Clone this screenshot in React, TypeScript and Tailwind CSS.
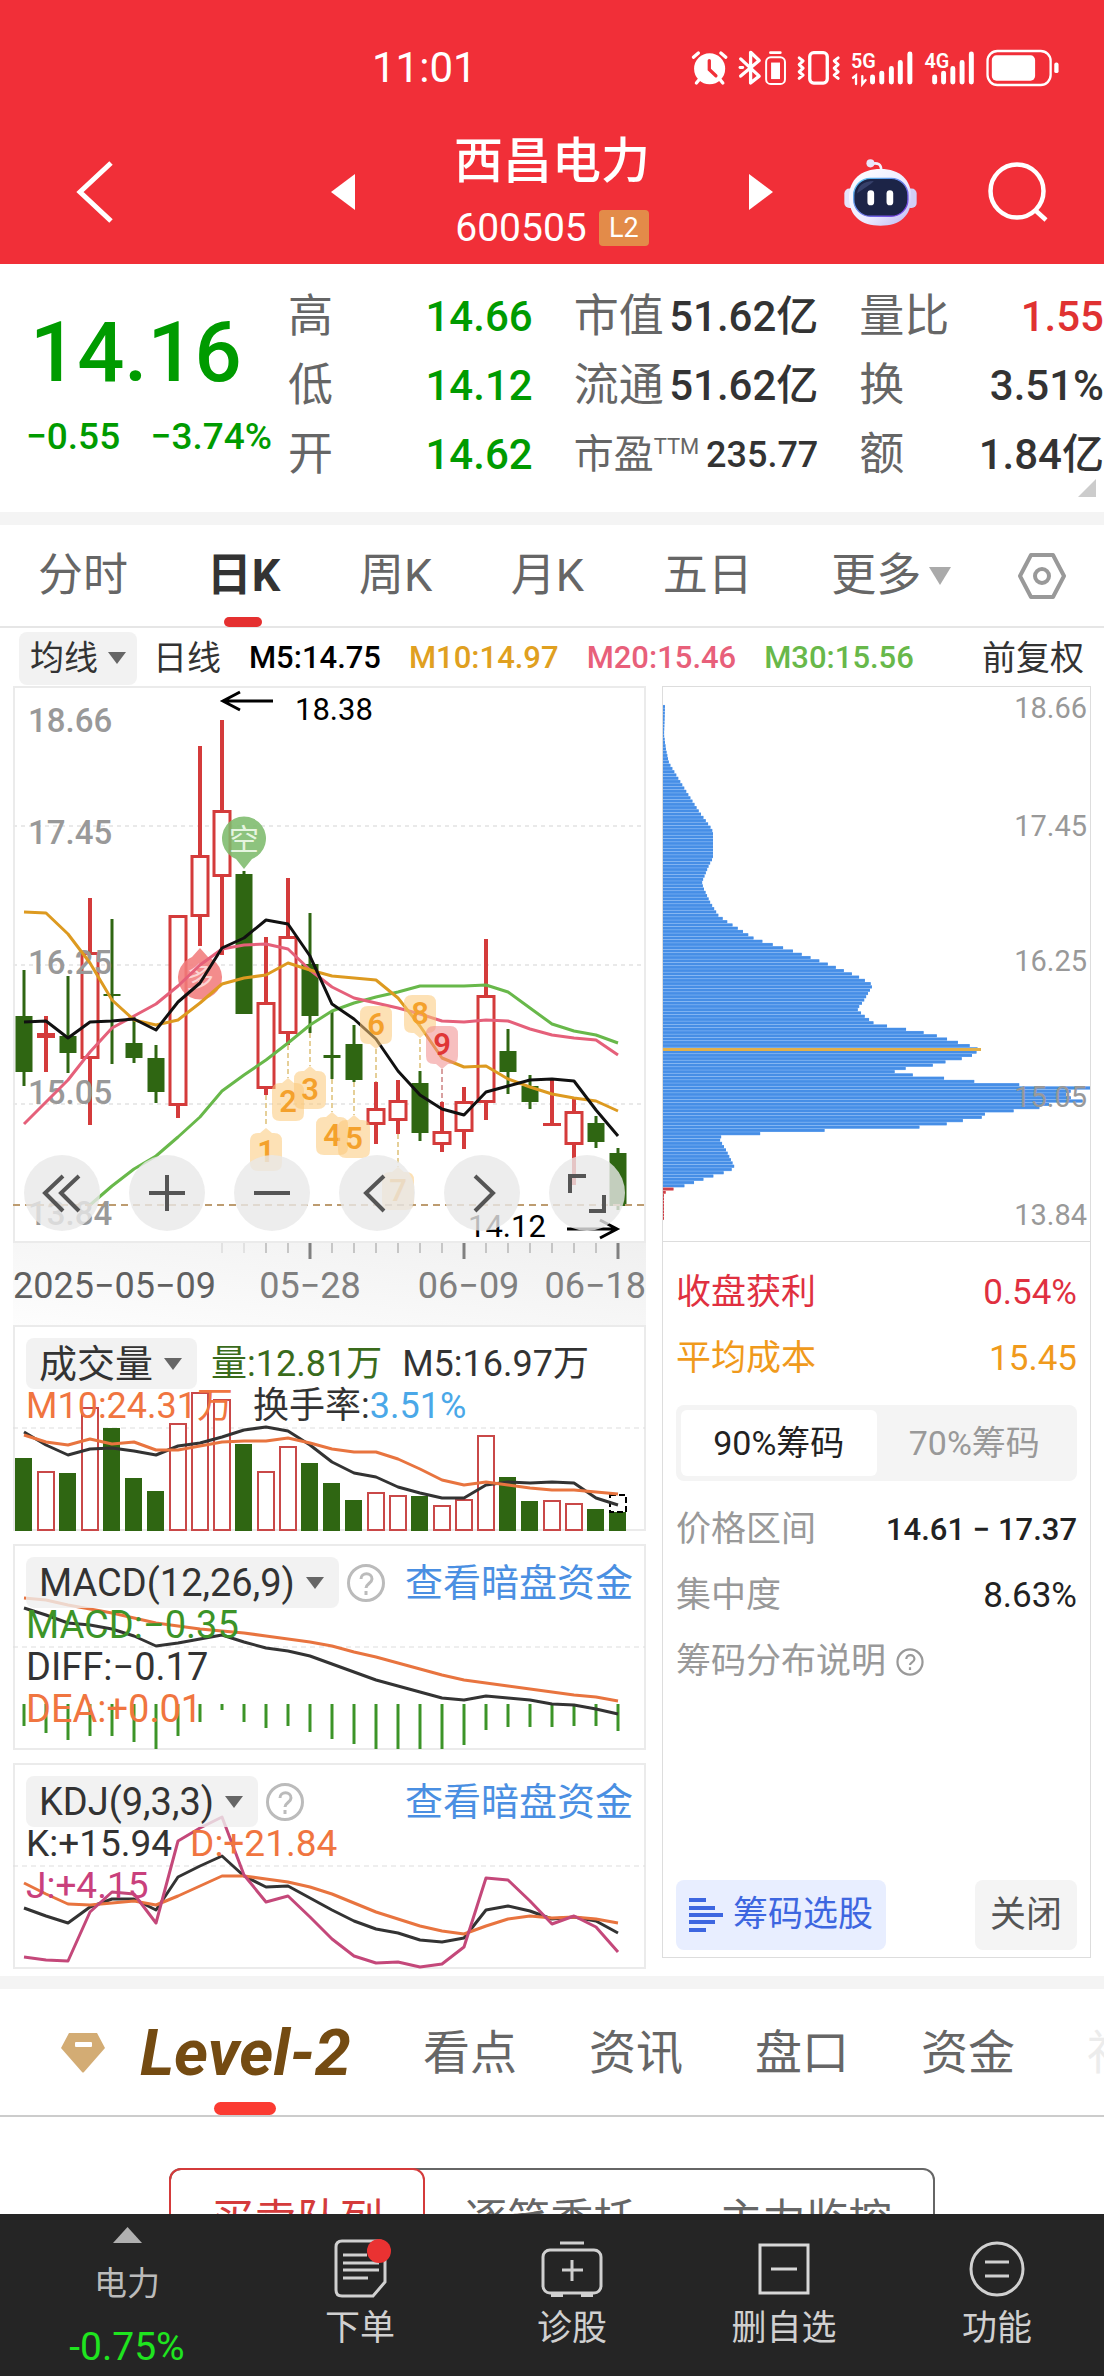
import React from "react";

const GREEN = "#2f6612";
const RED = "#d43b3b";

const X0 = 24;
const STEP = 22;
const xAt = (i: number) => X0 + STEP * i;

const toPoints = (ys: number[], start = 0) =>
  ys.map((y, i) => `${xAt(i + start)},${y}`).join(" ");

/* [kind, wick top, body top, body bottom, wick bottom] */
type Candle = [string, number, number, number, number];
const candles: Candle[] = [
  ["g", 970, 1016, 1072, 1086],
  ["r", 1016, 1033, 1038, 1072],
  ["g", 976, 1036, 1053, 1073],
  ["r", 898, 952, 1059, 1125],
  ["g", 919, 994, 996, 1064],
  ["g", 1017, 1043, 1058, 1063],
  ["g", 1045, 1058, 1092, 1103],
  ["r", 915, 915, 1106, 1118],
  ["r", 746, 855, 917, 946],
  ["r", 720, 810, 877, 955],
  ["g", 871, 874, 1014, 1014],
  ["r", 937, 1002, 1089, 1095],
  ["r", 878, 936, 1034, 1045],
  ["g", 913, 964, 1016, 1033],
  ["g", 1012, 1055, 1058, 1079],
  ["g", 1025, 1044, 1080, 1082],
  ["r", 1082, 1108, 1125, 1144],
  ["r", 1080, 1100, 1121, 1134],
  ["g", 1071, 1083, 1133, 1141],
  ["r", 1102, 1131, 1145, 1152],
  ["r", 1087, 1101, 1132, 1149],
  ["r", 939, 995, 1103, 1120],
  ["g", 1029, 1051, 1072, 1094],
  ["g", 1075, 1086, 1102, 1109],
  ["r", 1080, 1123, 1126, 1126],
  ["r", 1099, 1111, 1145, 1185],
  ["g", 1116, 1123, 1142, 1148],
  ["g", 1148, 1153, 1206, 1210],
];

const ma5 = [1022, 1021, 1038, 1022, 1021, 1019, 1030, 1002, 983, 948, 938, 920, 924, 956, 1004, 1019, 1039, 1071, 1095, 1109, 1115, 1092, 1086, 1080, 1079, 1081, 1110, 1136];
const ma10 = [912, 913, 934, 963, 1000, 1020, 1025, 1020, 1003, 984, 978, 975, 963, 970, 976, 978, 980, 998, 1026, 1058, 1067, 1066, 1079, 1087, 1094, 1098, 1101, 1111];
const ma20 = [1124, 1102, 1080, 1052, 1028, 1016, 1004, 986, 965, 949, 945, 944, 949, 970, 987, 998, 1003, 1008, 1014, 1021, 1022, 1020, 1021, 1029, 1035, 1038, 1040, 1055];
const ma30 = [1205, 1186, 1169, 1156, 1137, 1117, 1091, 1075, 1060, 1043, 1025, 1011, 1003, 997, 992, 986, 986, 986, 985, 992, 1008, 1024, 1031, 1035, 1043];

/* label, candle index, box top, points up?, dashed line from/to, hot? */
const counts: [string, number, number, boolean, number, number, boolean][] = [
  ["1", 11, 1133, true, 1095, 1127, false],
  ["2", 12, 1083, true, 1045, 1078, false],
  ["3", 13, 1071, true, 1033, 1066, false],
  ["4", 14, 1117, true, 1079, 1112, false],
  ["5", 15, 1120, true, 1082, 1115, false],
  ["6", 16, 1006, false, 1049, 1082, false],
  ["7", 17, 1172, true, 1134, 1167, false],
  ["8", 18, 995, false, 1039, 1071, false],
  ["9", 19, 1026, false, 1069, 1102, true],
];

const volumes: [string, number][] = [
  ["g", 1458], ["r", 1471], ["g", 1473], ["r", 1407], ["g", 1428], ["g", 1478], ["g", 1491],
  ["r", 1423], ["r", 1392], ["r", 1399], ["g", 1444], ["r", 1471], ["r", 1446], ["g", 1463],
  ["g", 1483], ["g", 1500], ["r", 1492], ["r", 1495], ["g", 1496], ["r", 1505], ["r", 1499],
  ["r", 1435], ["g", 1477], ["g", 1501], ["r", 1500], ["r", 1503], ["g", 1509], ["g", 1512],
];
const vol5 = [1432, 1445, 1455, 1449, 1448, 1451, 1455, 1446, 1443, 1437, 1430, 1427, 1431, 1445, 1462, 1473, 1477, 1487, 1493, 1498, 1498, 1485, 1482, 1483, 1482, 1483, 1498, 1505];
const vol10 = [1435, 1442, 1445, 1439, 1444, 1442, 1450, 1450, 1446, 1442, 1441, 1441, 1438, 1443, 1449, 1452, 1452, 1459, 1469, 1480, 1485, 1482, 1485, 1488, 1490, 1490, 1492, 1494];

const dea = [1599, 1601, 1606, 1610, 1614, 1619, 1624, 1627, 1630, 1632, 1634, 1637, 1640, 1643, 1647, 1653, 1658, 1664, 1670, 1676, 1681, 1684, 1687, 1690, 1693, 1696, 1698, 1702];
const diff = [1609, 1616, 1624, 1626, 1630, 1637, 1647, 1644, 1640, 1636, 1643, 1649, 1652, 1657, 1665, 1673, 1681, 1687, 1693, 1699, 1701, 1697, 1699, 1701, 1705, 1706, 1710, 1715];
const macd = [1727, 1734, 1741, 1737, 1737, 1743, 1750, 1737, 1723, 1711, 1723, 1729, 1727, 1733, 1740, 1745, 1750, 1750, 1750, 1750, 1746, 1731, 1728, 1728, 1728, 1727, 1727, 1732];

const kLine = [1909, 1917, 1924, 1908, 1900, 1900, 1911, 1878, 1867, 1857, 1877, 1888, 1887, 1899, 1911, 1922, 1930, 1934, 1941, 1943, 1939, 1911, 1907, 1912, 1920, 1918, 1922, 1934];
const dLine = [1884, 1895, 1905, 1906, 1904, 1902, 1906, 1897, 1887, 1877, 1877, 1880, 1883, 1888, 1895, 1904, 1913, 1920, 1927, 1932, 1935, 1927, 1920, 1917, 1919, 1918, 1920, 1924];
const jLine = [1958, 1961, 1962, 1913, 1893, 1895, 1924, 1842, 1829, 1818, 1876, 1903, 1897, 1918, 1940, 1957, 1964, 1963, 1968, 1965, 1948, 1879, 1881, 1902, 1925, 1917, 1928, 1953];

/* holding profile: [y, width] */
const profile: [number, number][] = [
  [705, 2], [735, 1], [750, 3], [763, 6], [773, 12], [791, 23], [810, 35], [828, 48], [832, 50],
  [858, 50], [865, 46], [882, 39], [887, 40], [902, 47], [915, 55], [921, 63], [939, 92], [950, 127],
  [963, 162], [976, 194], [985, 210], [1002, 200], [1009, 194], [1015, 200], [1024, 212], [1030, 247],
  [1034, 268], [1041, 290], [1046, 308], [1050, 317], [1053, 312], [1057, 307], [1063, 277],
  [1066, 267], [1069, 237], [1072, 231], [1075, 250], [1078, 279], [1082, 316], [1085, 360],
  [1088, 427], [1091, 408], [1096, 401], [1101, 420], [1104, 387], [1108, 375], [1111, 349],
  [1114, 322], [1118, 318], [1121, 297], [1124, 283], [1127, 260], [1130, 169], [1134, 90],
  [1137, 57], [1140, 57], [1150, 63], [1168, 72], [1172, 63], [1178, 44], [1185, 24], [1188, 14],
  [1191, 4], [1194, 1], [1222, 1],
];
const profileWidth = (y: number) => {
  for (let i = 1; i < profile.length; i++) {
    const [y1, w1] = profile[i];
    const [y0, w0] = profile[i - 1];
    if (y <= y1) return w0 + ((w1 - w0) * (y - y0)) / (y1 - y0);
  }
  return 1;
};
const PITCH = 3.26;
const levels = Array.from({ length: 158 }, (_, k) => 1088 + (k - 117) * PITCH).filter(
  (y) => y > 705 && y < 1222,
);

const Line = ({ ys, color, start = 0, w = 3 }: { ys: number[]; color: string; start?: number; w?: number }) => (
  <polyline points={toPoints(ys, start)} fill="none" stroke={color} strokeWidth={w} strokeLinejoin="round" />
);

function StatusIcons() {
  return (
    <svg className="h-[38px] w-[372px]" viewBox="30 25 1115 115" fill="none" stroke="#fff" strokeLinecap="round" aria-label="设备状态">
      <circle cx="84" cy="85" r="47" fill="#fff" stroke="none" />
      <path d="M35 50 50 37M133 50 118 37M52 118 44 128M116 118 124 128" strokeWidth="10" />
      <path d="M83 60V87L103 106" stroke="#f12f38" strokeWidth="10" />
      <path d="M178 55 234 107 208 128V35L234 60 178 107" strokeWidth="10" strokeLinejoin="round" />
      <path d="M176 81h8" strokeWidth="9" />
      <rect x="255" y="50" width="57" height="81" rx="14" strokeWidth="6" />
      <rect x="270" y="66" width="27" height="50" fill="#fff" stroke="none" />
      <path d="M268 36h30" strokeWidth="8" />
      <rect x="387" y="36" width="53" height="92" rx="12" strokeWidth="10" />
      <path d="M355 52l12 9-12 11 12 11-12 11 12 10-12 10M473 52l-12 9 12 11-12 11 12 11-12 10 12 10" strokeWidth="9" strokeLinejoin="round" />
      <text x="512" y="82" fill="#fff" stroke="none" fontSize="60" fontWeight="600" fontFamily="Roboto">5G</text>
      <path d="M518 112l9-7v26M546 107v24l10-12" strokeWidth="7" />
      <path d="M577 110v15M605 98v27M634 84v41M661 66v59M690 40v85" strokeWidth="15" />
      <text x="734" y="82" fill="#fff" stroke="none" fontSize="60" fontWeight="600" fontFamily="Roboto">4G</text>
      <path d="M765 110v15M792 98v27M820 84v41M848 66v59M876 40v85" strokeWidth="15" />
      <rect x="925" y="31" width="191" height="103" rx="30" strokeWidth="7" />
      <rect x="938" y="44" width="131" height="77" rx="14" fill="#fff" stroke="none" />
      <rect x="1127" y="66" width="13" height="32" rx="6" fill="#fff" stroke="none" />
    </svg>
  );
}

function Robot() {
  return (
    <svg className="h-[67px] w-[73px]" viewBox="491 347 218 200">
      <defs>
        <linearGradient id="shell" x1="0" y1="0" x2="1" y2="1">
          <stop offset="0" stopColor="#ffffff" />
          <stop offset="0.6" stopColor="#eceaff" />
          <stop offset="1" stopColor="#b9b5f2" />
        </linearGradient>
        <linearGradient id="rim" x1="0" y1="0" x2="1" y2="1">
          <stop offset="0" stopColor="#59c8f0" />
          <stop offset="1" stopColor="#7a35e0" />
        </linearGradient>
      </defs>
      <rect x="492" y="435" width="34" height="58" rx="15" fill="#e6e4fb" />
      <rect x="674" y="435" width="34" height="58" rx="15" fill="#d2cff6" />
      <path d="M570 362c22-6 33 0 32 20" fill="none" stroke="#f3f1ff" strokeWidth="8" />
      <circle cx="570" cy="360" r="12" fill="#e9e6fb" />
      <path d="M600 377c58 0 92 32 92 84 0 56-34 85-92 85s-94-29-94-85c0-52 36-84 94-84z" fill="url(#shell)" />
      <rect x="520" y="405" width="162" height="113" rx="50" fill="#1c2447" stroke="url(#rim)" strokeWidth="4" />
      <path d="M530 450c4-24 18-36 50-37-10 12-30 22-50 37z" fill="#36406a" />
      <rect x="561" y="440" width="20" height="45" rx="10" fill="#fff" />
      <rect x="618" y="440" width="20" height="45" rx="10" fill="#fff" />
    </svg>
  );
}

function Header() {
  return (
    <header className="h-[264px] shrink-0 bg-[#f12f38] text-white">
      <div className="flex h-[132px] items-center justify-between pr-[42px] pl-[372px] pt-1">
        <time className="text-[42px] leading-[48px]">11:01</time>
        <StatusIcons />
      </div>
      <div className="grid h-[120px] grid-cols-[1fr_442px_1fr] items-center">
        <button aria-label="返回" className="ml-[75px] w-10">
          <svg className="h-[64px] w-10" viewBox="0 0 40 64" fill="none" stroke="#fff" strokeWidth="5">
            <path d="M36 3 5 32 36 61" />
          </svg>
        </button>
        <div className="flex items-center justify-between">
          <button aria-label="上一只">
            <svg className="h-9 w-6" viewBox="0 0 24 36" fill="#fff"><path d="M24 0v36L0 18z" /></svg>
          </button>
          <div className="flex flex-col items-center">
            <h1 className="text-[49px] leading-[60px] font-medium">西昌电力</h1>
            <div className="mt-3 flex items-center gap-3">
              <span className="text-[39px] leading-[48px]">600505</span>
              <span className="flex h-9 w-[50px] items-center justify-center rounded bg-[#e38b49] text-[27px]">L2</span>
            </div>
          </div>
          <button aria-label="下一只">
            <svg className="h-9 w-6" viewBox="0 0 24 36" fill="#fff"><path d="M0 0v36L24 18z" /></svg>
          </button>
        </div>
        <div className="flex items-center justify-end gap-[71px] pr-[56px]">
          <button aria-label="智能助手"><Robot /></button>
          <button aria-label="搜索">
            <svg className="h-[60px] w-[60px]" viewBox="0 0 60 60" fill="none" stroke="#fff" strokeWidth="4.5">
              <circle cx="29" cy="29" r="26.5" />
              <path d="M47 48l11 10" />
            </svg>
          </button>
        </div>
      </div>
    </header>
  );
}

const stats: [string, string, string][] = [
  ["高", "14.66", "g"],
  ["市值", "51.62亿", "k"],
  ["量比", "1.55", "r"],
  ["低", "14.12", "g"],
  ["流通", "51.62亿", "k"],
  ["换", "3.51%", "k"],
  ["开", "14.62", "g"],
  ["ttm", "235.77", "k"],
  ["额", "1.84亿", "k"],
];

function Quote() {
  return (
    <section className="relative flex h-[248px] shrink-0">
      <div className="flex w-[288px] shrink-0 flex-col pt-[49px] text-[#009b00]">
        <strong className="pl-[30px] text-[83px] leading-[80px] font-medium">14.16</strong>
        <div className="mt-[24px] flex justify-between pr-4 pl-[26px] text-[37px] leading-[40px] font-medium">
          <span>−0.55</span>
          <span>−3.74%</span>
        </div>
      </div>
      <dl className="grid flex-1 grid-cols-3 gap-x-[41px] pt-[18px] auto-rows-[69px]">
        {stats.map(([label, value, tone], i) => (
          <div key={i} className="flex items-center justify-between whitespace-nowrap">
            {label === "ttm" ? (
              <dt className="flex text-[40px] leading-[60px] text-[#666]">
                市盈<sup className="top-0 text-[22px] leading-[44px]">TTM</sup>
              </dt>
            ) : (
              <dt className="text-[45px] leading-[60px] text-[#666]">{label}</dt>
            )}
            <dd
              className={
                tone === "g"
                  ? "text-[42px] leading-[60px] font-medium text-[#009b00]"
                  : tone === "r"
                    ? "text-[42px] leading-[60px] font-medium text-[#e03232]"
                    : label === "ttm"
                      ? "text-[36px] leading-[60px] font-medium text-[#333]"
                      : "text-[42px] leading-[60px] font-medium text-[#333]"
              }
            >
              {value}
            </dd>
          </div>
        ))}
      </dl>
      <svg className="absolute right-2 bottom-[15px] h-[18px] w-[18px]" viewBox="0 0 18 18" fill="#ccc"><path d="M18 0v18H0z" /></svg>
    </section>
  );
}

function PeriodTabs() {
  const tab = "text-[45px] leading-[60px] text-[#666]";
  return (
    <nav className="flex h-[103px] shrink-0 items-center justify-between border-b-2 border-[#e6e6e6] pr-[38px] pl-[38px]">
      <button className={tab}>分时</button>
      <button className="relative text-[45px] leading-[60px] font-bold text-[#333]">
        日K
        <span className="absolute -bottom-[21px] left-1/2 h-[10px] w-[38px] -translate-x-1/2 rounded-full bg-[#e53030]" />
      </button>
      <button className={tab}>周K</button>
      <button className={tab}>月K</button>
      <button className={tab}>五日</button>
      <button className="flex items-center gap-2 text-[45px] leading-[60px] text-[#666]">
        更多
        <svg className="h-[18px] w-[22px]" viewBox="0 0 22 18" fill="#aaa"><path d="M0 0h22L11 18z" /></svg>
      </button>
      <button aria-label="设置" className="-ml-3">
        <svg className="h-[46px] w-[48px]" viewBox="0 0 48 46" fill="none" stroke="#999" strokeWidth="4" strokeLinejoin="round">
          <path d="M13 2h22l11 21-11 21H13L2 23z" />
          <circle cx="24" cy="23" r="7" />
        </svg>
      </button>
    </nav>
  );
}

const Caret = () => (
  <svg className="h-3 w-[18px]" viewBox="0 0 18 12" fill="#666"><path d="M0 0h18L9 12z" /></svg>
);

function AverageBar() {
  return (
    <div className="flex h-[58px] shrink-0 items-center gap-7 pt-[2px] pr-5 pl-[19px] text-[31px] leading-[44px] whitespace-nowrap text-[#333]">
      <div className="flex items-center gap-[16px] text-[34px]">
        <button className="flex h-[53px] items-center gap-[10px] rounded-lg bg-[#f2f2f2] px-[11px]">
          均线 <Caret />
        </button>
        <span>日线</span>
      </div>
      <span className="font-medium text-black">M5:14.75</span>
      <span className="font-medium text-[#e0a020]">M10:14.97</span>
      <span className="font-medium text-[#e8607a]">M20:15.46</span>
      <span className="font-medium text-[#68b84a]">M30:15.56</span>
      <span className="ml-auto text-[34px]">前复权</span>
    </div>
  );
}

function CandleChart() {
  return (
    <div className="relative">
      <svg className="block h-auto w-full" viewBox="13 686 633 557" fontFamily="Roboto, 'Noto Sans CJK SC', sans-serif">
        <rect x="14" y="687" width="631" height="555" fill="#fff" stroke="#ebebeb" strokeWidth="2" />
        {[826, 965, 1104].map((y) => (
          <line key={y} x1="13" x2="645" y1={y} y2={y} stroke="#e9e9e9" strokeWidth="2" strokeDasharray="4 4" />
        ))}
        {counts.map(([n, i, , , a, b, hot]) => (
          <line key={n} x1={xAt(i)} x2={xAt(i)} y1={a} y2={b} stroke={hot ? "#d8a0a0" : "#e5cf98"} strokeWidth="2" strokeDasharray="5 3" />
        ))}
        {candles.map(([kind, wt, bt, bb, wb], i) => {
          const x = xAt(i);
          if (kind === "g")
            return (
              <g key={i} fill={GREEN}>
                <rect x={x - 1.5} y={wt} width="3" height={wb - wt} />
                <rect x={x - 8.5} y={bt} width="17" height={bb - bt} />
              </g>
            );
          const flat = bb - bt < 6;
          return (
            <g key={i}>
              <path d={`M${x} ${wt}V${bt}M${x} ${bb}V${wb}`} stroke={RED} strokeWidth="4" />
              {flat ? (
                <rect x={x - 9} y={bt} width="18" height={bb - bt} fill={RED} />
              ) : (
                <rect x={x - 8} y={bt + 1.5} width="16" height={bb - bt - 3} fill="#fff" stroke={RED} strokeWidth="3" />
              )}
            </g>
          );
        })}
        <g fill="#999" fontSize="33" fontWeight="500">
          <text x="28" y="732">18.66</text>
          <text x="28" y="844">17.45</text>
          <text x="28" y="974">16.25</text>
          <text x="28" y="1104">15.05</text>
          <text x="28" y="1225">13.84</text>
        </g>
        <path d="M236 859l8 10 8-10a22 22 0 1 0-16 0z" fill="#7dbb6c" fillOpacity="0.88" />
        <text x="244" y="850" textAnchor="middle" fontSize="30" fill="#e6f5e0">空</text>
        <path d="M192 957l8-9 8 9a22 22 0 1 1-16 0z" fill="#f17c7c" fillOpacity="0.88" />
        <text x="200" y="988" textAnchor="middle" fontSize="28" fill="#fbd3d3">多</text>
        <Line ys={ma30} start={3} color="#68b84a" />
        <Line ys={ma20} color="#e5607a" />
        <Line ys={ma10} color="#dd9a20" />
        <Line ys={ma5} color="#111" />
        {counts.map(([n, i, y, up, , , hot]) => {
          const x = xAt(i);
          return (
            <g key={n}>
              <path
                d={
                  up
                    ? `M${x - 16} ${y + 8}q0-8 8-8h2l6-5 6 5h2q8 0 8 8v22q0 8-8 8h-16q-8 0-8-8z`
                    : `M${x - 16} ${y + 8}q0-8 8-8h16q8 0 8 8v22q0 8-8 8h-2l-6 5-6-5h-2q-8 0-8-8z`
                }
                fill={hot ? "#f08a8a" : "#fcc878"}
                fillOpacity="0.55"
              />
              <text x={x} y={y + 29} textAnchor="middle" fontSize="31" fontWeight="600" fill={hot ? "#e03636" : "#f4a12c"}>
                {n}
              </text>
            </g>
          );
        })}
        <line x1="13" x2="645" y1="1205" y2="1205" stroke="#bd9c70" strokeWidth="2" strokeDasharray="7 5" />
        <g stroke="#000" strokeWidth="3" fill="none">
          <path d="M273 701H223M240 692l-17 9 17 9" />
          <path d="M567 1229h50M600 1220l17 9-17 9" />
        </g>
        <g fill="#000" fontSize="31">
          <text x="295" y="720">18.38</text>
          <text x="468" y="1237">14.12</text>
        </g>
      </svg>
      <div className="absolute inset-x-0 bottom-[12px] flex justify-between pr-[21px] pl-[11px]">
        {[
          ["最早", "M39 21 21 38 39 56M55 21 37 38 55 56"],
          ["放大", "M38 20V56M20 38H56"],
          ["缩小", "M20 38H56"],
          ["向左", "M45 21 27 38 45 56"],
          ["向右", "M31 21 49 38 31 56"],
          ["全屏", "M21 38V21H37M55 40V56H40"],
        ].map(([name, d]) => (
          <button key={name} aria-label={name} className="h-[76px] w-[76px] rounded-full bg-[#e8e8e8]/80">
            <svg viewBox="0 0 76 76" fill="none" stroke="#555" strokeWidth="4"><path d={d} /></svg>
          </button>
        ))}
      </div>
    </div>
  );
}

function DateAxis() {
  return (
    <div className="h-[82px] bg-linear-to-bl from-[#f0f0f0] to-[#fdfdfd]">
      <svg className="block h-4 w-full" viewBox="13 1243 633 16" preserveAspectRatio="none" stroke="#999">
        {Array.from({ length: 19 }, (_, k) => k + 9).map((i) => {
          const major = i === 13 || i === 20 || i === 27;
          return (
            <line key={i} x1={xAt(i)} x2={xAt(i)} y1="1243" y2={major ? 1259 : 1253} stroke={major ? "#808080" : "#999"} strokeWidth={major ? 3 : 1} opacity={i < 11 ? 0.4 : 1} />
          );
        })}
      </svg>
      <div className="flex justify-between pt-1 text-[36px] leading-[46px] text-[#808080]">
        <span className="text-[#606060]">2025−05−09</span>
        <span className="pl-[18px]">05−28</span>
        <span className="pl-[32px]">06−09</span>
        <span>06−18</span>
      </div>
    </div>
  );
}

function Panel({ top, drawing, children }: { top: number; drawing: React.ReactNode; children: React.ReactNode }) {
  return (
    <section className="relative aspect-[633/206] w-full">
      <svg className="absolute inset-0 h-full w-full" viewBox={`13 ${top} 633 206`}>
        <rect x="14" y={top + 1} width="631" height="204" fill="#fff" stroke="#ebebeb" strokeWidth="2" />
        <line x1="13" x2="645" y1={top + 103} y2={top + 103} stroke="#ddd" strokeWidth="1" strokeDasharray="5 4" />
        {drawing}
      </svg>
      <div className="relative pt-[13px] pr-[13px] pl-[13px] leading-[42px] whitespace-nowrap text-[#333]">
        {children}
      </div>
    </section>
  );
}

const chip = "flex h-[51px] items-center gap-[11px] rounded-lg bg-[#efefef]/80 pr-[15px] pl-[13px] text-[38px] text-[#333]";

const Help = () => (
  <button aria-label="说明">
    <svg className="h-[38px] w-[38px]" viewBox="0 0 38 38" fill="none">
      <circle cx="19" cy="19" r="17.5" stroke="#bbb" strokeWidth="3" />
      <path d="M14 15c0-7 11-7 11 0 0 4-6 5-6 9M19 27v4" stroke="#bbb" strokeWidth="3" />
    </svg>
  </button>
);

function Volume() {
  return (
    <Panel
      top={1325}
      drawing={
        <>
          {volumes.map(([kind, y], i) =>
            kind === "g" ? (
              <rect key={i} x={xAt(i) - 9} y={y} width="17" height={1531 - y} fill={GREEN} />
            ) : (
              <rect key={i} x={xAt(i) - 8} y={y + 1} width="16" height={1529 - y} fill="#fff" stroke="#c94848" strokeWidth="2" />
            ),
          )}
          <rect x="610" y="1495" width="16" height="17" fill="#fff" stroke="#000" strokeWidth="2" strokeDasharray="6 3" />
          <Line ys={vol5} color="#333" />
          <Line ys={vol10} color="#e8743f" />
        </>
      }
    >
      <div className="flex h-[51px] items-center text-[36px]">
        <button className={chip}>成交量 <Caret /></button>
        <span className="pl-[14px] text-[#3a6b1c]">量:12.81万</span>
        <span className="pl-5">M5:16.97万</span>
      </div>
      <div className="-mt-1 flex gap-5 text-[36px]">
        <span className="text-[#f07540]">M10:24.31万</span>
        <span>换手率:<span className="text-[#4aa8e8]">3.51%</span></span>
      </div>
    </Panel>
  );
}

function Macd() {
  return (
    <Panel
      top={1545}
      drawing={
        <>
          {macd.map((y, i) => (
            <line key={i} x1={xAt(i)} x2={xAt(i)} y1="1705" y2={y} stroke="#3c9428" strokeWidth="3" />
          ))}
          <Line ys={diff} color="#333" />
          <Line ys={dea} color="#e8743f" />
        </>
      }
    >
      <div className="flex h-[51px] items-center">
        <button className={chip}>MACD(12,26,9) <Caret /></button>
        <span className="flex flex-1 items-center pl-2"><Help /></span>
        <a href="#funds" className="text-[38px] text-[#4a8fe2]">查看暗盘资金</a>
      </div>
      <div className="-mt-1 text-[38px]">
        <p className="text-[#3c9428]">MACD:−0.35</p>
        <p>DIFF:−0.17</p>
        <p className="text-[#f07540]">DEA:+0.01</p>
      </div>
    </Panel>
  );
}

function Kdj() {
  return (
    <Panel
      top={1764}
      drawing={
        <>
          <Line ys={kLine} color="#333" />
          <Line ys={dLine} color="#e8743f" />
          <Line ys={jLine} color="#c4487a" />
        </>
      }
    >
      <div className="flex h-[51px] items-center">
        <button className={chip}>KDJ(9,3,3) <Caret /></button>
        <span className="flex flex-1 items-center pl-2"><Help /></span>
        <a href="#funds" className="text-[38px] text-[#4a8fe2]">查看暗盘资金</a>
      </div>
      <div className="-mt-1 text-[37px]">
        <p className="flex gap-[18px]">
          <span>K:+15.94</span>
          <span className="text-[#f07540]">D:+21.84</span>
        </p>
        <p className="text-[#c9407c]">J:+4.15</p>
      </div>
    </Panel>
  );
}

function Row({ label, value, tone }: { label: string; value: string; tone: string }) {
  return (
    <div className="flex h-[66px] items-center justify-between whitespace-nowrap">
      <dt className={tone}>{label}</dt>
      <dd className={tone === "text-[#999]" ? "text-[#222]" : tone}>{value}</dd>
    </div>
  );
}

function Chips() {
  return (
    <aside className="flex flex-col border border-[#ddd] text-[35px]">
      <svg className="block h-auto w-full border-b border-[#ddd]" viewBox="662 687 427 554" fontFamily="Roboto">
        {levels.map((y, k) => (
          <g key={k}>
            <rect x="662" y={y - PITCH / 2} width={profileWidth(y)} height={PITCH} fill={y > 1186 ? "#f09a9a" : "#76aef2"} />
            <rect x="662" y={y - 1.3} width={profileWidth(y)} height="2.5" fill={y > 1186 ? "#cc4048" : "#468ee6"} />
          </g>
        ))}
        <rect x="662" y="1048" width="318" height="3" fill="#e2b04a" />
        <g fill="#999" fontSize="29" textAnchor="end">
          <text x="1086" y="718">18.66</text>
          <text x="1086" y="836">17.45</text>
          <text x="1086" y="971">16.25</text>
          <text x="1086" y="1107">15.05</text>
          <text x="1086" y="1225">13.84</text>
        </g>
      </svg>
      <div className="flex flex-1 flex-col px-[13px] pt-[18px] pb-[7px]">
        <dl>
          <Row label="收盘获利" value="0.54%" tone="text-[#e03040]" />
          <Row label="平均成本" value="15.45" tone="text-[#f09a1c]" />
        </dl>
        <div className="mt-[13px] mb-4 grid h-[76px] shrink-0 grid-cols-2 rounded-lg bg-[#f4f4f4] p-[5px] text-[34px]">
          <button className="rounded-md bg-white text-[#222]">90%筹码</button>
          <button className="text-[#999]">70%筹码</button>
        </div>
        <dl>
          <div className="flex h-[66px] items-center justify-between whitespace-nowrap">
            <dt className="text-[#999]">价格区间</dt>
            <dd className="text-[31px] font-medium text-[#222]">14.61 − 17.37</dd>
          </div>
          <Row label="集中度" value="8.63%" tone="text-[#999]" />
        </dl>
        <a href="#chips" className="flex h-[66px] items-center gap-[10px] text-[#999]">
          筹码分布说明
          <svg className="h-7 w-7" viewBox="0 0 38 38" fill="none">
            <circle cx="19" cy="19" r="17" stroke="#999" strokeWidth="3" />
            <path d="M14 15c0-7 11-7 11 0 0 4-6 5-6 8M19 26v4" stroke="#999" strokeWidth="3" />
          </svg>
        </a>
        <div className="mt-auto flex items-end justify-between">
          <button className="flex h-[70px] items-center gap-[10px] rounded-lg bg-[#e8eeff] px-[13px] text-[#3d66e0]">
            <svg className="h-[34px] w-[34px]" viewBox="0 0 34 34" fill="#3d66e0">
              <path d="M0 0h17v4H0zM0 8h26v4H0zM0 15h34v4H0zM0 22h26v4H0zM0 30h17v4H0z" />
            </svg>
            筹码选股
          </button>
          <button className="h-[70px] w-[102px] rounded-lg bg-[#f4f4f4] text-[36px] text-[#555]">关闭</button>
        </div>
      </div>
    </aside>
  );
}

function LevelTabs() {
  const tab = "shrink-0 pt-[2px] text-[47px] text-[#666]";
  return (
    <nav className="flex h-[128px] items-center gap-[72px] overflow-hidden border-b-2 border-[#ccc] pl-[60px] whitespace-nowrap">
      <button className="relative flex h-full shrink-0 items-center gap-[34px]">
        <svg className="h-[41px] w-[46px]" viewBox="0 0 46 41">
          <path d="M9 1h28l8 15-21 24q-1 1-2 0L1 16z" fill="#d3ac74" />
          <rect x="15" y="10" width="17" height="5" rx="1" fill="#fff" />
        </svg>
        <span className="pt-[2px] text-[65px] leading-[70px] font-bold text-[#744b12] italic">Level-2</span>
        <span className="absolute bottom-0 left-[154px] h-[13px] w-[62px] rounded-full bg-[#fb3b32]" />
      </button>
      <button className={tab}>看点</button>
      <button className={tab}>资讯</button>
      <button className={tab}>盘口</button>
      <button className={tab}>资金</button>
      <button className="shrink-0 pt-[2px] text-[47px] text-[#ececec]">社区</button>
    </nav>
  );
}

function Queue() {
  return (
    <div className="mx-[169px] mt-[51px] flex h-[100px] rounded-xl border-2 border-[#666] text-[43px] whitespace-nowrap text-[#666]">
      <button className="-m-[2px] flex w-[256px] shrink-0 justify-center rounded-xl border-2 border-[#d43b3b] pt-[20px] leading-[60px] text-[#d43b3b]">
        买卖队列
      </button>
      <button className="flex flex-1 justify-center pt-[20px] leading-[60px]">逐笔委托</button>
      <button className="flex flex-1 justify-center pt-[20px] leading-[60px]">主力监控</button>
    </div>
  );
}

function BottomNav() {
  const item = "flex flex-col items-center pt-[24px]";
  const icon = "h-[60px] w-[64px]";
  const label = "pt-[5px] text-[35px] leading-[52px]";
  return (
    <nav className="grid h-[162px] shrink-0 grid-cols-[254fr_212fr_212fr_212fr_214fr] bg-[#252525] text-[#d0d0d0]">
      <button className="flex flex-col items-center pt-[13px]">
        <svg className="h-4 w-[29px]" viewBox="0 0 29 16" fill="#b0b0b0"><path d="M14.5 0 29 16H0z" /></svg>
        <span className="pt-4 text-[33px] leading-[50px] text-[#bbb]">电力</span>
        <span className="pt-[13px] text-[39px] leading-[50px] text-[#1fe51f]">-0.75%</span>
      </button>
      <button className={item}>
        <svg className={icon} viewBox="0 0 64 60" fill="none" stroke="#d0d0d0" strokeWidth="3">
          <path d="M14 3h37q6 0 6 6v35L45 58H14q-6 0-6-6V9q0-6 6-6z" />
          <path d="M15 17h24M15 25h36M15 32h36M15 40h25" />
          <circle cx="51" cy="13" r="12" fill="#ea3232" stroke="none" />
        </svg>
        <span className={label}>下单</span>
      </button>
      <button className={item}>
        <svg className={icon} viewBox="0 0 64 60" fill="none" stroke="#d0d0d0" strokeWidth="3">
          <path d="M20 5h24M32 22v21M22 32h21" />
          <rect x="3" y="12" width="58" height="43" rx="7" />
          <path d="M11 57h12M41 57h12" strokeWidth="4" />
        </svg>
        <span className={label}>诊股</span>
      </button>
      <button className={item}>
        <svg className={icon} viewBox="0 0 64 60" fill="none" stroke="#d8d8d8" strokeWidth="3">
          <rect x="8" y="7" width="48" height="48" />
          <path d="M19 31h26" />
        </svg>
        <span className={label}>删自选</span>
      </button>
      <button className={item}>
        <svg className={icon} viewBox="0 0 64 60" fill="none" stroke="#d0d0d0" strokeWidth="3">
          <circle cx="32" cy="31" r="26" />
          <path d="M20 24h24M20 38h24" />
        </svg>
        <span className={label}>功能</span>
      </button>
    </nav>
  );
}

export default function App() {
  return (
    <div className="flex h-screen flex-col overflow-hidden bg-white font-[Roboto,'Noto_Sans_CJK_SC',sans-serif]">
      <Header />
      <main className="flex min-h-0 flex-1 flex-col overflow-hidden">
        <Quote />
        <div className="h-[13px] shrink-0 bg-[#f4f4f4]" />
        <PeriodTabs />
        <AverageBar />
        <div className="grid shrink-0 grid-cols-[633fr_429fr] items-start gap-4 px-[13px] pb-[7px]">
          <div className="flex flex-col">
            <CandleChart />
            <DateAxis />
            <div className="flex flex-col gap-[13px]">
              <Volume />
              <Macd />
              <Kdj />
            </div>
          </div>
          <div className="flex h-full flex-col pb-[11px] *:flex-1">
            <Chips />
          </div>
        </div>
        <div className="h-[13px] shrink-0 bg-[#f4f4f4]" />
        <div className="shrink-0">
          <LevelTabs />
          <Queue />
        </div>
      </main>
      <BottomNav />
    </div>
  );
}
